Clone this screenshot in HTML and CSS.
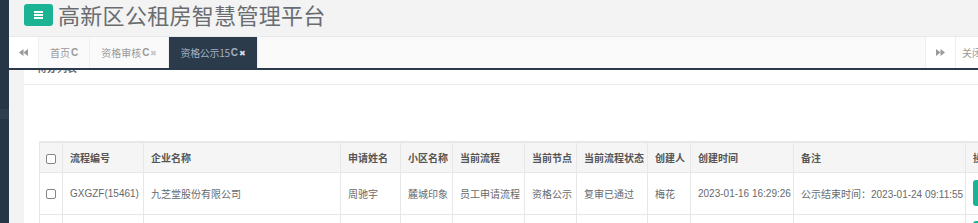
FILE: index.html
```html
<!DOCTYPE html>
<html lang="zh-CN">
<head>
<meta charset="utf-8">
<title>高新区公租房智慧管理平台</title>
<link rel="stylesheet" href="styles.css">
</head>
<body>
<div class="app">
  <nav class="sidebar"><div class="side-active"></div></nav>
  <div class="page">
    <header class="topbar">
      <button class="menu-btn" aria-label="菜单">
        <svg width="9" height="8" viewBox="0 0 9 8"><rect x="0" y="0" width="9" height="2" fill="#fff"/><rect x="0" y="3" width="9" height="2" fill="#fff"/><rect x="0" y="6" width="9" height="2" fill="#fff"/></svg>
      </button>
      <h1 class="title">高新区公租房智慧管理平台</h1>
    </header>
    <div class="tabbar">
      <button class="tab-nav" aria-label="向左">
        <svg width="9" height="7" viewBox="0 0 9 7"><polygon points="0,3.5 4.5,0 4.5,7" fill="#9a9a9a"/><polygon points="4.5,3.5 9,0 9,7" fill="#9a9a9a"/></svg>
      </button>
      <div class="tabs">
        <a class="tab">首页<b class="ref">C</b></a>
        <a class="tab">资格审核<b class="ref">C</b><span class="x">✖</span></a>
        <a class="tab active">资格公示15<b class="ref">C</b><span class="x">✖</span></a>
      </div>
      <button class="tab-nav right" aria-label="向右">
        <svg width="9" height="7" viewBox="0 0 9 7"><polygon points="0,0 4.5,3.5 0,7" fill="#9a9a9a"/><polygon points="4.5,0 9,3.5 4.5,7" fill="#9a9a9a"/></svg>
      </button>
      <button class="tab-close">关闭操作</button>
    </div>
    <main class="content">
      <section class="ibox">
        <div class="ibox-title">待办列表</div>
        <div class="ibox-content">
          <table class="grid">
            <colgroup>
              <col class="c-chk"><col class="c-no"><col class="c-co"><col class="c-name"><col class="c-area"><col class="c-flow"><col class="c-node"><col class="c-state"><col class="c-user"><col class="c-time"><col class="c-note"><col class="c-op">
            </colgroup>
            <thead>
              <tr>
                <th class="chk"><span class="box"></span></th>
                <th>流程编号</th>
                <th>企业名称</th>
                <th>申请姓名</th>
                <th>小区名称</th>
                <th>当前流程</th>
                <th>当前节点</th>
                <th>当前流程状态</th>
                <th>创建人</th>
                <th>创建时间</th>
                <th>备注</th>
                <th>操作</th>
              </tr>
            </thead>
            <tbody>
              <tr>
                <td class="chk"><span class="box"></span></td>
                <td>GXGZF(15461)</td>
                <td>九芝堂股份有限公司</td>
                <td>周驰宇</td>
                <td>麓城印象</td>
                <td>员工申请流程</td>
                <td>资格公示</td>
                <td>复审已通过</td>
                <td>梅花</td>
                <td>2023-01-16 16:29:26</td>
                <td>公示结束时间：2023-01-24 09:11:55</td>
                <td><span class="op-btn">查看</span></td>
              </tr>
              <tr class="next">
                <td class="chk"></td><td></td><td></td><td></td><td></td><td></td><td></td><td></td><td></td><td></td><td></td><td><span class="op-btn"></span></td>
              </tr>
            </tbody>
          </table>
        </div>
      </section>
    </main>
  </div>
</div>
</body>
</html>
```
FILE: styles.css
```css
* { box-sizing: border-box; }
html, body {
  margin: 0;
  padding: 0;
  width: 978px;
  height: 223px;
  overflow: hidden;
  background: #f3f3f4;
  font-family: "Liberation Sans", "Noto Sans CJK SC", sans-serif;
  font-size: 10px;
  color: #676a6c;
}
.app {
  display: flex;
  width: 978px;
  height: 223px;
}
.sidebar {
  flex: 0 0 9px;
  background: #273646;
  padding-top: 109px;
}
.side-active {
  height: 10px;
  background: #2e3e50;
}
.page {
  flex: 1 1 auto;
  min-width: 0;
  overflow: hidden;
  display: flex;
  flex-direction: column;
}
.topbar {
  height: 37px;
  flex: 0 0 37px;
  display: flex;
  align-items: flex-start;
  padding-left: 15px;
  background: #f3f3f4;
  border-bottom: 1px solid #e7eaec;
}
.menu-btn {
  margin-top: 4px;
  width: 29px;
  height: 22px;
  border: 0;
  border-radius: 3px;
  background: #1ab394;
  display: flex;
  align-items: center;
  justify-content: center;
  padding: 0;
}
.title {
  margin: 0 0 0 5px;
  font-family: "Noto Sans CJK SC", sans-serif;
  font-weight: normal;
  font-size: 22px;
  line-height: 28px;
  letter-spacing: 0.3px;
  color: #6a6d70;
  white-space: nowrap;
}
.tabbar {
  flex: 0 0 33px;
  height: 33px;
  display: flex;
  margin-right: -38px;
  background: #fafafa;
  border-bottom: 2px solid #2b3a4a;
}
.tab-nav {
  flex: 0 0 30px;
  height: 31px;
  border: 0;
  border-right: 1px solid #eee;
  background: #fff;
  display: flex;
  align-items: center;
  justify-content: center;
  padding: 0;
}
.tab-nav.right {
  flex-basis: 31px;
  border-left: 1px solid #eee;
}
.tabs {
  flex: 1 1 auto;
  display: flex;
}
.tab {
  height: 31px;
  display: flex;
  align-items: center;
  padding: 0 11px;
  border-right: 1px solid #eee;
  color: #999;
  font-family: "Noto Sans CJK SC", sans-serif;
  font-size: 10px;
  white-space: nowrap;
}
.tab .ref {
  font-family: "Liberation Sans", sans-serif;
  font-weight: bold;
  font-size: 10px;
  margin-left: 1px;
}
.tab .x {
  font-size: 8px;
  color: #c8c8c8;
  margin-left: 1px;
}
.tab.active {
  background: #2b3b4c;
  color: #a7b1c2;
  letter-spacing: -0.3px;
  padding-right: 12px;
}
.tab.active .x { color: #d8dde5; }
.tab-close {
  flex: 0 0 60px;
  height: 31px;
  border: 0;
  background: #fff;
  color: #999;
  font-family: "Noto Sans CJK SC", sans-serif;
  font-size: 10px;
  text-align: left;
  padding: 0 0 0 6px;
  white-space: nowrap;
}
.content {
  flex: 1 1 auto;
  overflow: hidden;
  padding-left: 15px;
}
.ibox {
  margin-top: -10px;
  width: 1100px;
  background: #fff;
}
.ibox-title {
  height: 25px;
  padding: 3px 0 0 13px;
  border-bottom: 1px solid #e7eaec;
  font-family: "Noto Sans CJK SC", sans-serif;
  font-weight: bold;
  font-size: 10px;
  line-height: 10px;
  color: #676a6c;
}
.ibox-content {
  padding: 56px 0 0 15px;
}
.grid {
  border-collapse: collapse;
  table-layout: fixed;
  width: 1006px;
  border-top: 2px solid #e7e7e7;
}
.grid th, .grid td {
  border: 1px solid #e7e7e7;
  padding: 0 7px;
  text-align: left;
  white-space: nowrap;
  overflow: hidden;
  vertical-align: middle;
}
.grid th {
  height: 30px;
  background: #f5f5f6;
  color: #555;
  font-weight: bold;
  font-family: "Noto Sans CJK SC", sans-serif;
}
.grid td {
  height: 42px;
  font-family: "Liberation Sans", "Noto Sans CJK SC", sans-serif;
  color: #676a6c;
}
.grid .chk { padding: 0; text-align: center; }
.box {
  display: inline-block;
  width: 10px;
  height: 10px;
  border: 1px solid #858585;
  border-radius: 2px;
  background: #fff;
  vertical-align: middle;
}
.c-chk { width: 23px; }
.c-no { width: 81px; }
.c-co { width: 197px; }
.c-name { width: 60px; }
.c-area { width: 52px; }
.c-flow { width: 72px; }
.c-node { width: 52px; }
.c-state { width: 71px; }
.c-user { width: 43px; }
.c-time { width: 103px; }
.c-note { width: 172px; }
.c-op { width: 80px; }
.op-btn {
  display: inline-block;
  height: 26px;
  padding: 0 8px;
  line-height: 26px;
  border-radius: 3px;
  background: #1ab394;
  color: #fff;
  font-family: "Noto Sans CJK SC", sans-serif;
}
.grid tr.next td { height: 30px; vertical-align: top; padding-top: 6px; }
```
